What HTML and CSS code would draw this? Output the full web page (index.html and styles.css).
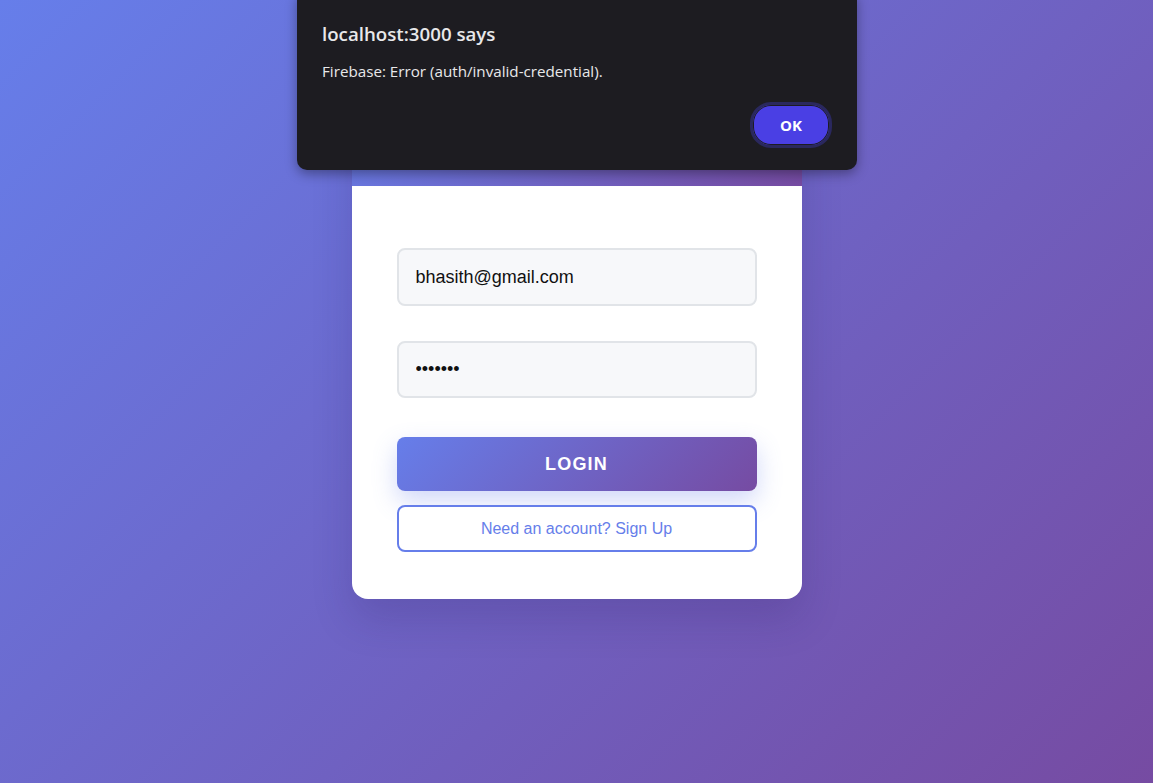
FILE: index.html
```html
<!DOCTYPE html>
<html>
<head>
<meta charset="utf-8">
<link rel="stylesheet" href="styles.css">
</head>
<body>
<div class="page">
  <div class="card">
    <div class="card-header"><h2 class="card-title">Login</h2></div>
    <form class="card-body">
      <input class="field" type="email" value="bhasith@gmail.com">
      <input class="field field-pass" type="password" value="1234567">
      <button type="button" class="btn-login">LOGIN</button>
      <button type="button" class="btn-signup">Need an account? Sign Up</button>
    </form>
  </div>
</div>
<div class="dialog">
  <div class="dialog-title">localhost:3000 says</div>
  <div class="dialog-msg">Firebase: Error (auth/invalid-credential).</div>
  <div class="dialog-actions"><button type="button" class="dialog-ok">OK</button></div>
</div>
</body>
</html>
```
FILE: styles.css
```css
* { box-sizing: border-box; }
html, body { margin: 0; padding: 0; }
body {
  width: 1153px;
  height: 783px;
  overflow: hidden;
  background: linear-gradient(135deg, #667eea 0%, #764ba2 100%);
  font-family: "Liberation Sans", Arial, sans-serif;
  position: relative;
}
.page {
  display: flex;
  justify-content: center;
  padding-top: 96px;
}
.card {
  width: 450px;
  background: #fff;
  border-radius: 16px;
  overflow: hidden;
  box-shadow: 0 20px 40px rgba(40, 20, 90, 0.18);
}
.card-header {
  height: 90px;
  background: linear-gradient(135deg, #667eea 0%, #764ba2 100%);
  display: flex;
  align-items: center;
  justify-content: center;
}
.card-title {
  margin: 0;
  color: #fff;
  font-size: 26px;
}
.card-body {
  display: flex;
  flex-direction: column;
  padding: 62px 45px 47px;
  margin: 0;
}
.field {
  height: 58px;
  border: 2px solid #e1e4e8;
  border-radius: 8px;
  background: #f7f8fa;
  padding: 0 17px;
  font-family: "Liberation Sans", Arial, sans-serif;
  font-size: 18px;
  color: #111;
  outline: none;
}
.field-pass {
  margin-top: 35px;
  height: 57px;
}
.btn-login {
  margin-top: 39px;
  height: 54px;
  border: none;
  border-radius: 8px;
  background: linear-gradient(135deg, #667eea 0%, #764ba2 100%);
  color: #fff;
  font-family: "Liberation Sans", Arial, sans-serif;
  font-weight: bold;
  font-size: 18px;
  letter-spacing: 1.2px;
  box-shadow: 0 10px 25px rgba(102, 126, 234, 0.3);
}
.btn-signup {
  margin-top: 14px;
  height: 47px;
  border: 2px solid #667eea;
  border-radius: 8px;
  background: #fff;
  color: #667eea;
  font-family: "Liberation Sans", Arial, sans-serif;
  font-size: 16px;
}
.dialog {
  position: absolute;
  left: 297px;
  top: -10px;
  width: 560px;
  height: 180px;
  background: #1d1c21;
  border-radius: 10px;
  box-shadow: 0 4px 12px rgba(0, 0, 0, 0.35);
  padding: 32px 25px 0 25px;
  font-family: "Open Sans", "Noto Sans", sans-serif;
  color: #e8e8ea;
}
.dialog-title {
  font-size: 18.7px;
  font-weight: 600;
  line-height: 24px;
}
.dialog-msg {
  margin-top: 14px;
  font-size: 15.2px;
  line-height: 22px;
}
.dialog-actions {
  display: flex;
  justify-content: flex-end;
  margin-top: 20px;
}
.dialog-ok {
  width: 82px;
  height: 46px;
  border-radius: 21px;
  border: 3px solid #2a285e;
  background: #4a3fe4;
  box-shadow: inset 0 0 0 1px #1d1c21;
  color: #fff;
  font-family: "Open Sans", "Noto Sans", sans-serif;
  font-weight: 700;
  font-size: 15px;
  margin-right: 0;
}
```
